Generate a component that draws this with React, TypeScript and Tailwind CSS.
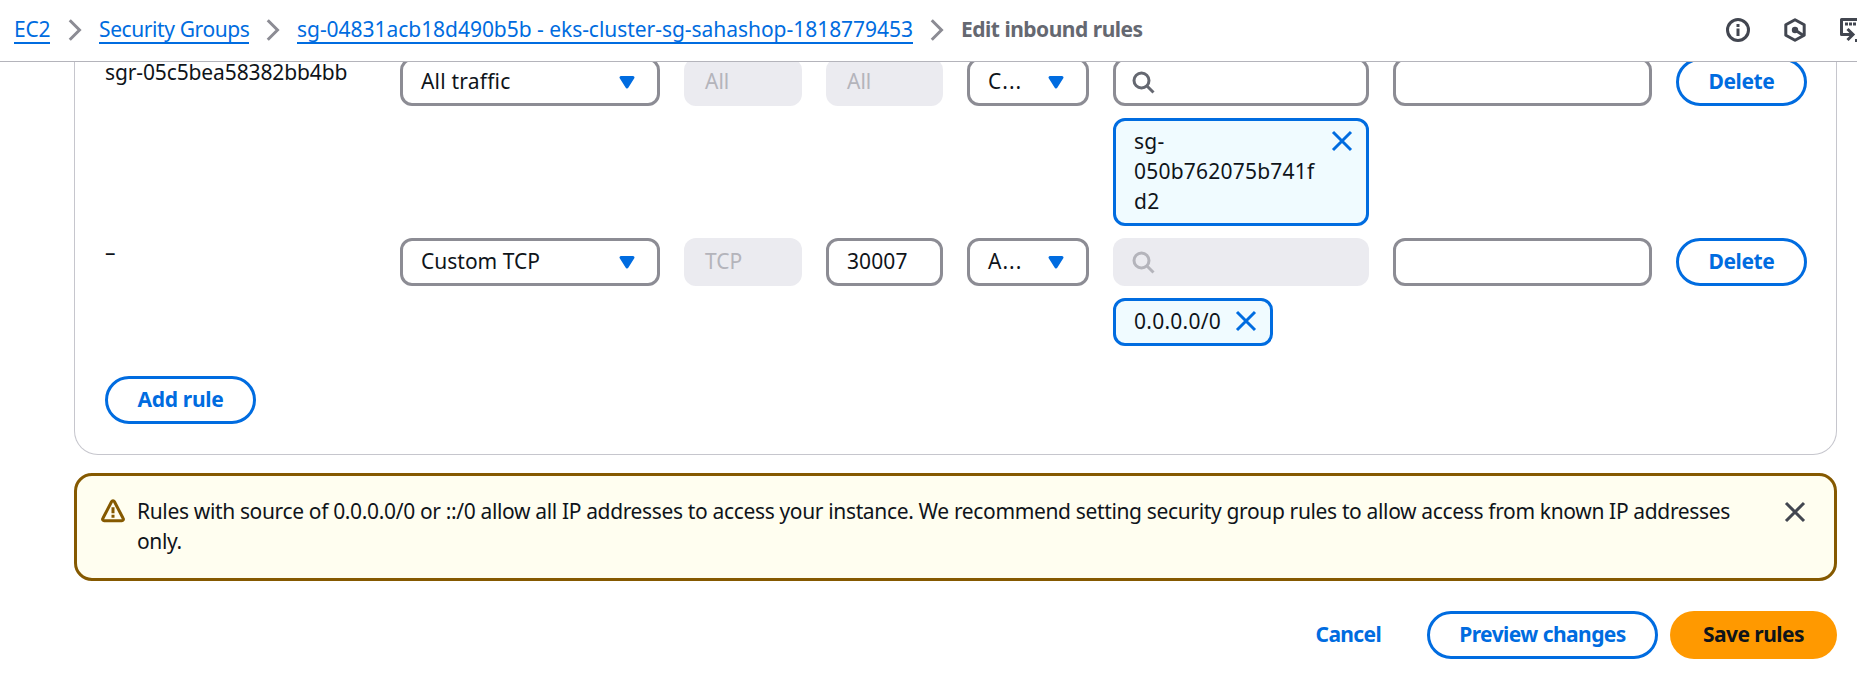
import React from "react";

function Chevron() {
  return (
    <svg className="mt-px h-6 w-6 shrink-0" viewBox="0 0 16 16" fill="none" stroke="#8c8c94" strokeWidth="2">
      <path d="m4.500 1.500 6.500 6.500-6.500 6.500" />
    </svg>
  );
}

function Caret() {
  return (
    <svg className="h-6 w-6 shrink-0" viewBox="0 0 16 16" fill="#006ce0" stroke="#006ce0" strokeWidth="2" strokeLinejoin="round">
      <path d="M4 5h8l-4 6.300-4-6.300z" />
    </svg>
  );
}

function Search({ disabled }: { disabled?: boolean }) {
  return (
    <svg className="h-6 w-6 shrink-0" viewBox="0 0 16 16" fill="none" stroke={disabled ? "#b4b4bb" : "#656871"} strokeWidth="2">
      <circle cx="7" cy="7" r="5" />
      <path d="m15 15-4.500-4.500" />
    </svg>
  );
}

function Close({ color, className }: { color: string; className: string }) {
  return (
    <svg className={"h-6 w-6 shrink-0 " + className} viewBox="0 0 16 16" fill="none" stroke={color} strokeWidth="2">
      <path d="m2 2 12 12M14 2 2 14" />
    </svg>
  );
}

function Select({ label, className = "" }: { label: string; className?: string }) {
  return (
    <div className="flex h-12 items-center justify-between rounded-xl border-3 border-[#8c8c94] bg-white pr-[18px] pl-[18px]">
      <span className={"pb-[2px] whitespace-nowrap " + className}>{label}</span>
      <Caret />
    </div>
  );
}

function Field({ value, disabled }: { value?: string; disabled?: boolean }) {
  return disabled ? (
    <div className="flex h-12 items-center rounded-xl bg-[#ebebf0] px-[21px] pb-[2px] text-[#b4b4bb]">{value}</div>
  ) : (
    <div className="flex h-12 items-center rounded-xl border-3 border-[#8c8c94] bg-white px-[18px] pb-[2px] tracking-[0.1px]">{value}</div>
  );
}

function SearchField({ disabled }: { disabled?: boolean }) {
  return (
    <div className={disabled ? "flex h-12 items-center rounded-xl bg-[#ebebf0] px-[18px]" : "flex h-12 items-center rounded-xl border-3 border-[#8c8c94] bg-white px-[15px]"}>
      <Search disabled={disabled} />
    </div>
  );
}

function Outline({ children, className }: { children: React.ReactNode; className: string }) {
  return (
    <button className={"flex h-12 items-center justify-center rounded-full border-3 border-[#006ce0] bg-white pb-[2px] font-bold whitespace-nowrap text-[#006ce0] " + className}>
      {children}
    </button>
  );
}

const columns = "grid grid-cols-[271px_260px_118px_117px_122px_256px_259px_131px] gap-x-6";
const crumb = "border-b-2 border-[#006ce0] whitespace-nowrap";

export default function App() {
  return (
    <div className="flex h-[691px] w-[1857px] flex-col overflow-hidden bg-white font-['Noto_Sans',sans-serif] text-[21px] leading-[30px] text-[#0f141a]">
      <header className="flex h-[62px] shrink-0 items-start justify-between border-b border-[#b4b4bb]">
        <nav className="flex items-start pt-[17px] pl-[14px] leading-[25px] text-[#006ce0]">
          <a className={crumb + " w-[36px] tracking-[-0.2px]"}>EC2</a>
          <div className="flex w-[49px] justify-center"><Chevron /></div>
          <a className={crumb + " w-[150px] tracking-[-0.4px]"}>Security Groups</a>
          <div className="flex w-[48px] justify-center"><Chevron /></div>
          <a className={crumb + " w-[616px] tracking-[-0.04px]"}>sg-04831acb18d490b5b - eks-cluster-sg-sahashop-1818779453</a>
          <div className="flex w-[48px] justify-center"><Chevron /></div>
          <span className="font-bold tracking-[-0.5px] whitespace-nowrap text-[#656871]">Edit inbound rules</span>
        </nav>
        <div className="flex w-[131px] shrink-0 gap-[33px] overflow-hidden pt-[18px] text-[#424650]">
          <svg className="h-6 w-6 shrink-0" viewBox="0 0 16 16" fill="none" stroke="currentColor" strokeWidth="2">
            <circle cx="8" cy="8" r="7" />
            <path d="M8 12V7M8 6V4" />
          </svg>
          <svg className="h-6 w-6 shrink-0" viewBox="0 0 24 24" fill="none" stroke="currentColor" strokeWidth="3">
            <path d="M12 1.700 21.200 6.800v10.400L12 22.300 2.800 17.200V6.800z" strokeLinejoin="round" />
            <circle cx="12" cy="12" r="3.200" fill="currentColor" stroke="none" />
            <path d="m12 12 8.500 5.500" />
          </svg>
          <svg className="h-6 w-6 shrink-0" viewBox="0 0 24 24" fill="none" stroke="currentColor" strokeWidth="3">
            <path d="M24 1.500H1.500v15H12" strokeLinejoin="round" />
            <path d="m7.500 11 5.500 5.500-5.500 5.500" />
            <path d="M5 6h3M9 6h3M13 6h3M15 22.500h3" />
          </svg>
        </div>
      </header>

      <main className="flex flex-1 flex-col pr-5 pl-[74px]">
        <section className="-mt-1 h-[397px] shrink-0 rounded-b-3xl border-x border-b border-[#c6c6cd] pl-[30px] [clip-path:inset(4px_0_0_0)]">
          <div className={columns + " mb-3 h-[168px]"}>
            <div className="-mt-px tracking-[-0.12px] whitespace-nowrap">sgr-05c5bea58382bb4bb</div>
            <Select label="All traffic" className="tracking-[0.2px]" />
            <Field value="All" disabled />
            <Field value="All" disabled />
            <Select label="C..." className="tracking-[1px]" />
            <div className="flex flex-col gap-3">
              <SearchField />
              <div className="flex h-[108px] justify-between rounded-xl border-3 border-[#006ce0] bg-[#f0fbff] pt-[5px] pr-[12px] pl-[18px]">
                <span className="w-[192px] tracking-[0.22px] break-all">sg-<br />050b762075b741fd2</span>
                <Close color="#006ce0" className="mt-[3px]" />
              </div>
            </div>
            <Field />
            <Outline className="w-full tracking-[-0.4px]">Delete</Outline>
          </div>
          <div className={columns}>
            <div className="-mt-px tracking-normal">–</div>
            <Select label="Custom TCP" />
            <Field value="TCP" disabled />
            <Field value="30007" />
            <Select label="A..." className="tracking-[1px]" />
            <div className="flex flex-col gap-3">
              <SearchField disabled />
              <div className="flex h-12 w-[160px] justify-between rounded-xl border-3 border-[#006ce0] bg-[#f0fbff] pt-[5px] pr-[12px] pl-[18px]">
                <span className="tracking-[0.25px]">0.0.0.0/0</span>
                <Close color="#006ce0" className="mt-[3px]" />
              </div>
            </div>
            <Field />
            <Outline className="w-full tracking-[-0.4px]">Delete</Outline>
          </div>
          <Outline className="mt-[30px] w-[151px] tracking-[-0.3px]">Add rule</Outline>
        </section>

        <section className="mt-[18px] flex h-[108px] shrink-0 rounded-[18px] border-3 border-[#855900] bg-[#fffef0] pt-[20px] pr-[27px] pl-[24px]">
          <svg className="mt-[3px] mr-3 h-6 w-6 shrink-0" viewBox="0 0 16 16" fill="none" stroke="#855900" strokeWidth="2" strokeLinejoin="round">
            <path d="M7.100 1.700 1.200 13c-.4.700.1 1.500.9 1.500h11.800c.8 0 1.300-.8.9-1.500L8.900 1.700a1 1 0 0 0-1.800 0z" />
            <path d="M8 5.500v4M8 10.500v2" />
          </svg>
          <p className="flex-1 tracking-[-0.35px] whitespace-nowrap">
            Rules with source of 0.0.0.0/0 or ::/0 allow all IP addresses to access your instance. We recommend setting security group rules to allow access from known IP addresses<br />only.
          </p>
          <Close color="#424650" className="mt-[4px]" />
        </section>

        <footer className="mt-[30px] flex h-12 items-center justify-end">
          <button className="mr-[46px] pb-[2px] font-bold tracking-[-0.65px] text-[#006ce0]">Cancel</button>
          <Outline className="mr-3 w-[231px] tracking-[-0.56px]">Preview changes</Outline>
          <button className="h-12 w-[167px] rounded-full bg-[#ff9900] pb-[2px] font-bold tracking-[-0.55px]">Save rules</button>
        </footer>
      </main>
    </div>
  );
}
